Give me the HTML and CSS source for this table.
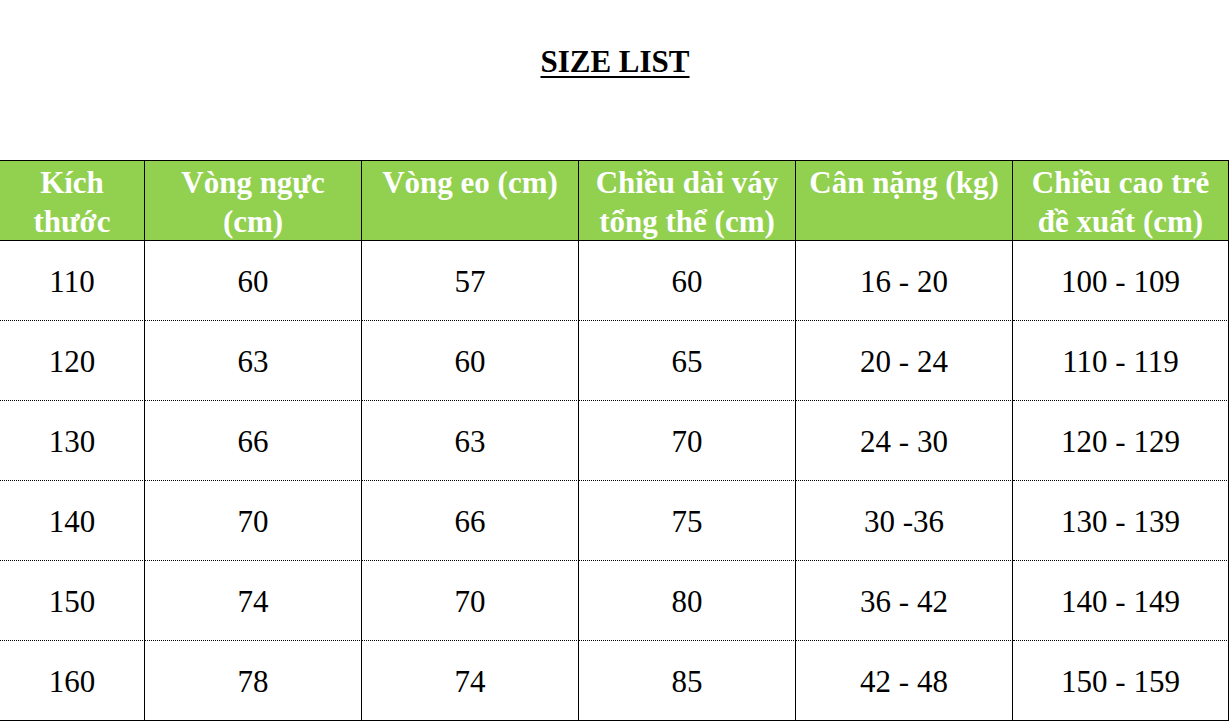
FILE: index.html
```html
<!DOCTYPE html>
<html lang="vi">
<head>
<meta charset="utf-8">
<title>Size list</title>
<link rel="stylesheet" href="styles.css">
</head>
<body>
<main class="page">
  <h1 class="title">SIZE LIST</h1>
  <div class="size-table">
    <div class="cell head">Kích<br>thước</div>
    <div class="cell head">Vòng ngực<br>(cm)</div>
    <div class="cell head">Vòng eo (cm)</div>
    <div class="cell head">Chiều dài váy<br>tổng thể (cm)</div>
    <div class="cell head">Cân nặng (kg)</div>
    <div class="cell head">Chiều cao trẻ<br>đề xuất (cm)</div>

    <div class="cell">110</div><div class="cell">60</div><div class="cell">57</div><div class="cell">60</div><div class="cell">16 - 20</div><div class="cell">100 - 109</div>
    <div class="cell">120</div><div class="cell">63</div><div class="cell">60</div><div class="cell">65</div><div class="cell">20 - 24</div><div class="cell">110 - 119</div>
    <div class="cell">130</div><div class="cell">66</div><div class="cell">63</div><div class="cell">70</div><div class="cell">24 - 30</div><div class="cell">120 - 129</div>
    <div class="cell">140</div><div class="cell">70</div><div class="cell">66</div><div class="cell">75</div><div class="cell">30 -36</div><div class="cell">130 - 139</div>
    <div class="cell">150</div><div class="cell">74</div><div class="cell">70</div><div class="cell">80</div><div class="cell">36 - 42</div><div class="cell">140 - 149</div>
    <div class="cell last">160</div><div class="cell last">78</div><div class="cell last">74</div><div class="cell last">85</div><div class="cell last">42 - 48</div><div class="cell last">150 - 159</div>
  </div>
</main>
</body>
</html>
```
FILE: styles.css
```css
html, body {
  margin: 0;
  padding: 0;
  background: #ffffff;
}

.page {
  font-family: "Liberation Serif", "Times New Roman", serif;
  color: #000000;
  width: 1230px;
}

.title {
  margin: 0;
  padding-top: 44px;
  height: 120px;
  box-sizing: border-box;
  text-align: center;
  font-size: 31px;
  line-height: 36px;
  font-weight: bold;
  text-decoration: underline;
  text-decoration-thickness: 2px;
  text-underline-offset: 4px;
}

.size-table {
  margin-top: 40px;
  width: 1229px;
  display: grid;
  grid-template-columns: 145px 217px 217px 217px 217px 216px;
  grid-auto-rows: 80px;
  border-top: 1px solid #000;
}

.cell {
  box-sizing: border-box;
  border-right: 1px solid #000;
  border-bottom: 1px dotted #000;
  display: flex;
  align-items: center;
  justify-content: center;
  text-align: center;
  font-size: 31px;
  line-height: 36px;
  padding-top: 2px;
}

.cell.head {
  background: #92d050;
  color: #ffffff;
  font-weight: bold;
  align-items: flex-start;
  line-height: 39px;
  padding-top: 2px;
  border-bottom: 1px solid #000;
  height: 80px;
}

.cell.last {
  border-bottom: 1px solid #000;
}
```
